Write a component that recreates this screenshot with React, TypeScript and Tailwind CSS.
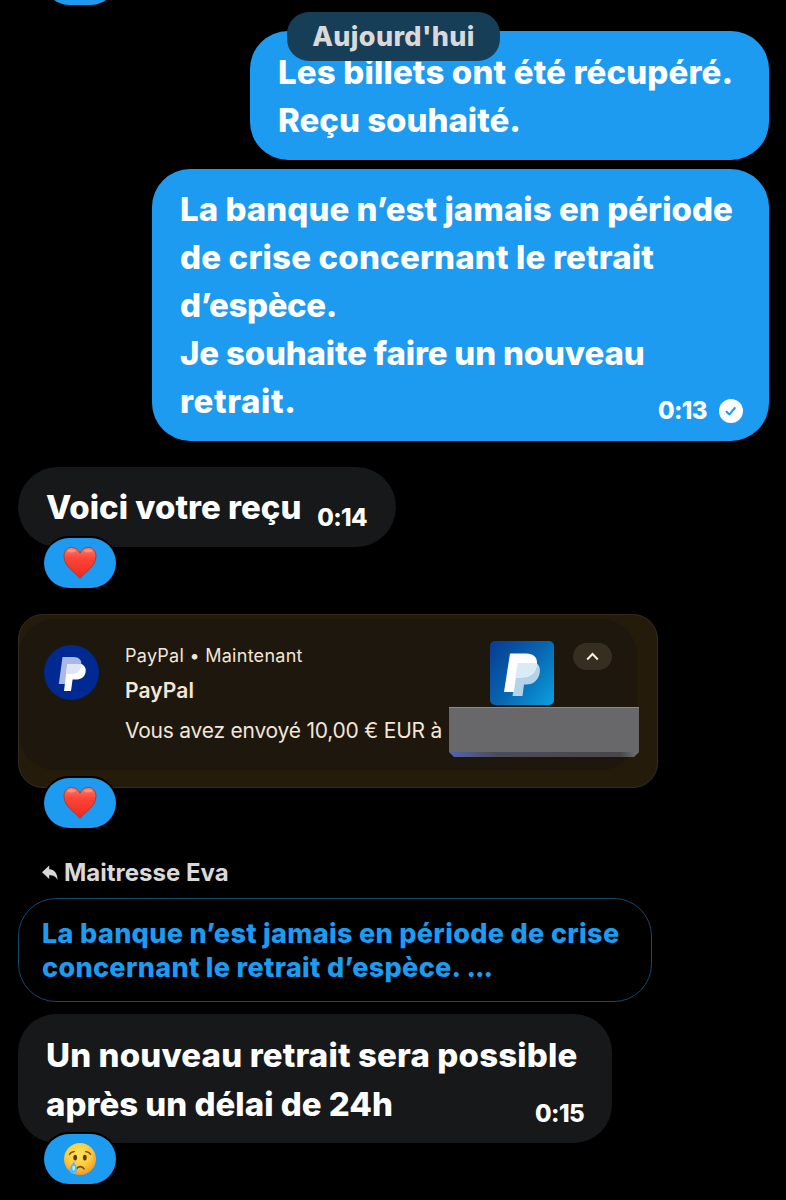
import type { ReactNode } from "react";
import { clsx } from "clsx";

const time = "text-[24px] leading-[28px] tracking-[-0.6px] whitespace-nowrap";

function Heart() {
  return (
    <svg width="36" height="36" viewBox="0 0 36 36">
      <defs>
        <linearGradient id="heart" x1="0" y1="0" x2="0" y2="1">
          <stop offset="0" stopColor="#ff7a6c" />
          <stop offset="0.35" stopColor="#fb4638" />
          <stop offset="1" stopColor="#f0271f" />
        </linearGradient>
      </defs>
      <path
        d="M18 33.400C15 28.600 2 22 2 11.200C2 5.600 5.600 2.400 9.800 2.400C13.600 2.400 16.500 4.800 18 8.200C19.500 4.800 22.400 2.400 26.200 2.400C30.400 2.400 34 5.600 34 11.200C34 22 21 28.600 18 33.400Z"
        fill="url(#heart)"
        stroke="#a5332f"
        strokeWidth="0.8"
      />
      <ellipse cx="9.500" cy="5.800" rx="4.200" ry="1.600" fill="#ffb9ad" opacity="0.5" />
      <ellipse cx="26" cy="5.800" rx="4.200" ry="1.600" fill="#ffb9ad" opacity="0.5" />
    </svg>
  );
}

function CryingFace() {
  return (
    <svg width="36" height="36" viewBox="0 0 36 36">
      <defs>
        <radialGradient id="face" cx="0.45" cy="0.35" r="0.65">
          <stop offset="0" stopColor="#ffe65c" />
          <stop offset="0.6" stopColor="#fdca3e" />
          <stop offset="1" stopColor="#f09a26" />
        </radialGradient>
      </defs>
      <circle cx="18" cy="18" r="16" fill="url(#face)" />
      <ellipse cx="13.200" cy="16.600" rx="1.900" ry="2.800" fill="#5b3310" />
      <ellipse cx="22.800" cy="16.600" rx="1.900" ry="2.800" fill="#5b3310" />
      <g fill="none" stroke="#7a4a12" strokeWidth="1.300" strokeLinecap="round">
        <path d="M7.500 13.500C8.500 11.500 10 10.600 12.400 10.600" />
        <path d="M28.500 13.500C27.500 11.500 26 10.600 23.600 10.600" />
        <path d="M14.500 27.800C16 25 20.500 25 22 27.800" strokeWidth="1.700" />
      </g>
      <path
        d="M11.800 20.200C12.600 23 15 25.500 15 28.800C15 31.300 13.300 32.800 11.300 32.800C9.300 32.800 7.600 31.300 7.600 28.800C7.600 25.500 11 23 11.800 20.200Z"
        fill="#58b9ee"
      />
      <ellipse cx="11.700" cy="27" rx="1.300" ry="2.500" fill="#c7ecfd" />
    </svg>
  );
}

function VerifiedCheck() {
  return (
    <svg width="24" height="24" viewBox="0 0 24 24">
      <circle cx="12" cy="12" r="12" fill="#fff" />
      <path
        d="M7.500 12.700L10.500 15.400L15.800 9"
        fill="none"
        stroke="#1d9bf0"
        strokeWidth="2"
        strokeLinecap="round"
        strokeLinejoin="round"
      />
    </svg>
  );
}

function PayPalRound() {
  return (
    <svg width="56" height="56" viewBox="0 0 56 56" className="shrink-0">
      <circle cx="27.500" cy="27.500" r="27.500" fill="#002991" />
      <path
        d="M18.500 12H29.500C35 12 38 15 37.300 20C36.500 26 32.500 29 27 29H23.500L22.300 39H14.800Z"
        fill="#a9b8e4"
      />
      <path
        d="M23.300 19H37.300C40.500 20.500 42.300 23 41.600 27C40.600 32.500 37 34.500 32 34.500H28.600L27 46H20Z"
        fill="#fff"
      />
      <path d="M23.300 19H37.400C37 25.800 33 29 27 29H22Z" fill="#dfe5f7" />
    </svg>
  );
}

function PayPalSquare() {
  return (
    <svg width="64" height="64" viewBox="0 0 64 64" className="shrink-0">
      <defs>
        <linearGradient id="tile" x1="0" y1="0.100" x2="1" y2="0.900">
          <stop offset="0" stopColor="#063f94" />
          <stop offset="0.500" stopColor="#0865b0" />
          <stop offset="1" stopColor="#0b9bdc" />
        </linearGradient>
      </defs>
      <rect width="64" height="64" rx="5" fill="url(#tile)" />
      <path
        d="M28 22H46C49 23.500 50.500 27 49.800 31.500C48.600 39 43.500 43.500 36.500 43.500H34L32.500 55H22.500Z"
        fill="#b3d3e9"
      />
      <path
        d="M20 12.500H36.500C44 12.500 48 17 46.800 24C45.500 32.500 40 36.500 32 36.500H26L23.800 51H14Z"
        fill="#fff"
      />
      <path d="M27.500 22H46.900C46.400 31.800 40.500 36.500 32 36.500H25.400Z" fill="#dbebf5" />
    </svg>
  );
}

function Reaction({ children, className }: { children: ReactNode; className?: string }) {
  return (
    <div
      className={clsx(
        "relative z-10 ml-[26px] flex h-[50px] w-[72px] items-center justify-center rounded-[25px] bg-[#1d9bf0] ring-2 ring-black",
        className
      )}
    >
      {children}
    </div>
  );
}

function Line({ children, className }: { children: ReactNode; className?: string }) {
  return <p className={clsx("whitespace-nowrap", className)}>{children}</p>;
}

export default function App() {
  return (
    <div className="relative h-[1200px] w-[786px] overflow-hidden bg-black pr-[17px] pl-[18px] font-['Inter','Liberation_Sans',sans-serif] font-extrabold text-white">
      <Reaction className="-mt-[45px]">
        <Heart />
      </Reaction>

      <div className="absolute top-[12px] left-[287px] z-20 flex h-[49px] w-[213px] items-center justify-center rounded-[22px] bg-[#173e57] pt-px text-[27px] tracking-[0.35px] text-[#d9d9d9]">
        Aujourd'hui
      </div>

      <div className="mt-[26px] flex flex-col items-end gap-[9px] text-[33px] leading-[48px]">
        <div className="h-[129px] w-[519px] rounded-[38px] bg-[#1d9bf0] px-[28px] pt-[17px]">
          <Line className="tracking-[0.15px]">Les billets ont été récupéré.</Line>
          <Line>Reçu souhaité.</Line>
        </div>
        <div className="h-[272px] w-[617px] rounded-[38px] bg-[#1d9bf0] px-[28px] pt-4">
          <Line className="tracking-[0.05px]">La banque n’est jamais en période</Line>
          <Line className="tracking-[0.17px]">de crise concernant le retrait</Line>
          <Line className="tracking-[-0.4px]">d’espèce.</Line>
          <Line className="tracking-[-0.17px]">Je souhaite faire un nouveau</Line>
          <div className="flex items-center justify-between">
            <Line className="tracking-[0.6px]">retrait.</Line>
            <div className="mt-[20px] -mr-[2px] flex items-center gap-3">
              <span className={time}>0:13</span>
              <VerifiedCheck />
            </div>
          </div>
        </div>
      </div>

      <div className="mt-[26px] flex h-[80px] w-[378px] items-center justify-between rounded-[40px] bg-[#16181a] px-[28px] text-[33px] leading-[48px]">
        <Line>Voici votre reçu</Line>
        <span className={clsx(time, "mt-[21px] mr-px")}>0:14</span>
      </div>
      <Reaction className="-mt-[9px]">
        <Heart />
      </Reaction>

      <div className="mt-[26px] h-[174px] w-[640px] overflow-hidden rounded-[25px] border border-[#332d20] bg-[#241b0b] pt-[4px] font-normal text-[#f3e6d6]">
        <div className="flex h-[151px] w-[618px] rounded-[36px] bg-[#1d170e] pt-[22px] pl-[25px]">
          <div className="pt-[4px]">
            <PayPalRound />
          </div>
          <div className="ml-[25px] w-[324px] shrink-0">
            <Line className="mt-[3px] text-[18px] leading-[24px] tracking-[0.27px]">PayPal • Maintenant</Line>
            <Line className="mt-[11px] text-[21px] leading-[24px] font-semibold tracking-[0.1px]">PayPal</Line>
            <Line className="mt-[15px] text-[21px] leading-[26px] tracking-[-0.22px]">Vous avez envoyé 10,00 € EUR à</Line>
          </div>
          <div className="w-[190px] shrink-0">
            <div className="flex h-[66px] gap-[19px] pl-[41px]">
              <PayPalSquare />
              <div className="mt-[2px] flex h-[27px] w-[39px] items-center justify-center rounded-full bg-[#372e22]">
                <svg width="13" height="9" viewBox="0 0 13 9" fill="none" stroke="#fbeede" strokeWidth="2">
                  <path d="M1.200 7.500L6.500 2L11.800 7.500" />
                </svg>
              </div>
            </div>
            <svg width="190" height="50" viewBox="0 0 190 50">
              <defs>
                <linearGradient id="edge" x1="0" x2="1" y1="0" y2="0">
                  <stop offset="0" stopColor="#5363ad" />
                  <stop offset="0.250" stopColor="#4b4c5b" />
                  <stop offset="0.900" stopColor="#47474a" />
                  <stop offset="1" stopColor="#737477" />
                </linearGradient>
              </defs>
              <path d="M0 0H190V45L185 50H5L0 45Z" fill="url(#edge)" />
              <path d="M0 0H190V45H0Z" fill="#68686a" />
              <path d="M0 0.500H190" stroke="#8a8a8d" />
            </svg>
          </div>
        </div>
      </div>
      <Reaction className="-mt-[10px]">
        <Heart />
      </Reaction>

      <div className="mt-[29px] ml-[24px] flex h-[32px] items-center gap-[6px] text-[24px] leading-[32px] font-bold text-[#d9d9d9]">
        <svg width="16" height="16" viewBox="0 0 16 16" className="shrink-0">
          <path d="M7.200 0.500V4.200C12.500 4.600 15.400 8 15.600 15C13.800 11.500 11.500 10.400 7.200 10.300V14L0 7.200Z" fill="#d9d9d9" />
        </svg>
        <Line>Maitresse Eva</Line>
      </div>

      <div className="mt-[9px] h-[104px] w-[634px] rounded-[38px] border border-[#17496d] px-[23px] pt-[18px] text-[27px] leading-[34px] tracking-[0.34px] text-[#1d9bf0]">
        <Line>La banque n’est jamais en période de crise</Line>
        <Line>
          concernant le retrait d’espèce. <span className="tracking-[-1px]">...</span>
        </Line>
      </div>

      <div className="mt-[12px] h-[129px] w-[594px] rounded-[38px] bg-[#16181a] px-[28px] pt-[17px] text-[33px] leading-[48px]">
        <Line className="tracking-[0.15px]">Un nouveau retrait sera possible</Line>
        <div className="flex items-center justify-between">
          <Line>après un délai de 24h</Line>
          <span className={clsx(time, "mt-[21px]")}>0:15</span>
        </div>
      </div>
      <Reaction className="-mt-[9px]">
        <CryingFace />
      </Reaction>
    </div>
  );
}
